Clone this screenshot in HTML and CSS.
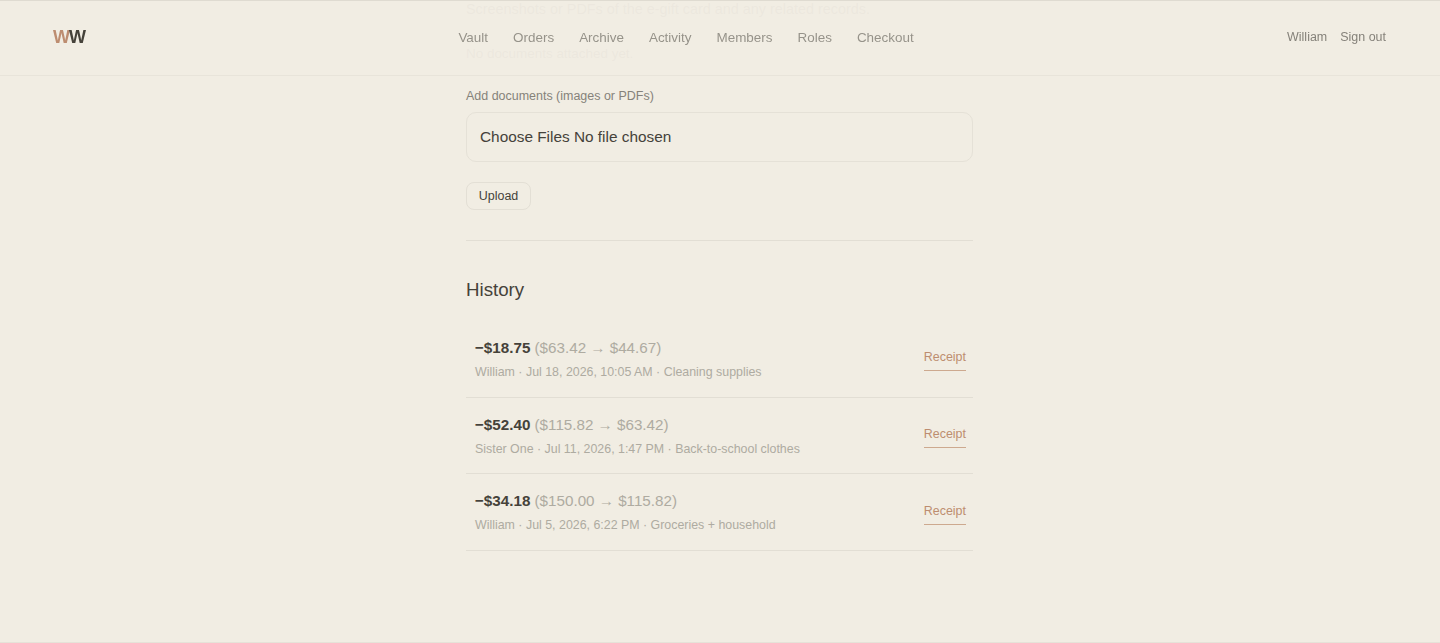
FILE: index.html
```html
<!DOCTYPE html>
<html lang="en">
<head>
<meta charset="utf-8">
<title>Vault</title>
<link rel="stylesheet" href="styles.css">
</head>
<body>
<header class="topbar">
  <a class="logo"><span class="logo-a">W</span><span class="logo-b">W</span></a>
  <nav class="nav">
    <a>Vault</a><a>Orders</a><a>Archive</a><a>Activity</a><a>Members</a><a>Roles</a><a>Checkout</a>
  </nav>
  <div class="user"><span>William</span><a>Sign out</a></div>
</header>
<main class="page">
  <p class="hint">Screenshots or PDFs of the e-gift card and any related records.</p>
  <p class="empty">No documents attached yet.</p>
  <label class="label">Add documents (images or PDFs)</label>
  <div class="file">Choose Files No file chosen</div>
  <button class="upload">Upload</button>
  <hr class="rule">
  <h2 class="title">History</h2>
  <ul class="list">
    <li class="row">
      <div class="info">
        <div class="amounts"><strong>−$18.75</strong> <span>($63.42 → $44.67)</span></div>
        <div class="meta">William · Jul 18, 2026, 10:05 AM · Cleaning supplies</div>
      </div>
      <a class="receipt">Receipt</a>
    </li>
    <li class="row">
      <div class="info">
        <div class="amounts"><strong>−$52.40</strong> <span>($115.82 → $63.42)</span></div>
        <div class="meta">Sister One · Jul 11, 2026, 1:47 PM · Back-to-school clothes</div>
      </div>
      <a class="receipt">Receipt</a>
    </li>
    <li class="row">
      <div class="info">
        <div class="amounts"><strong>−$34.18</strong> <span>($150.00 → $115.82)</span></div>
        <div class="meta">William · Jul 5, 2026, 6:22 PM · Groceries + household</div>
      </div>
      <a class="receipt">Receipt</a>
    </li>
  </ul>
</main>
</body>
</html>
```
FILE: styles.css
```css
* { box-sizing: border-box; }
html, body { margin: 0; height: 643px; overflow: hidden; }
body {
  background: #f1ede3;
  color: #45423a;
  font-family: "Liberation Sans", Arial, sans-serif;
  padding-right: 1px;
  border-top: 1px solid #dfdbd1;
  border-bottom: 1px solid #e6e2d8;
}
.topbar {
  position: fixed;
  top: 0;
  left: 0;
  right: 0;
  height: 76px;
  padding: 0 54px 2px 53px;
  display: flex;
  justify-content: space-between;
  align-items: center;
  background: rgba(241, 237, 227, 0.93);
  border-top: 1px solid #dfdbd1;
  border-bottom: 1px solid #e8e4da;
}
.logo { font-size: 18px; font-weight: 700; letter-spacing: -1px; }
.logo-a { color: #bd8d70; }
.logo-b { color: #45423a; }
.nav { display: flex; gap: 25px; font-size: 13.44px; color: #96938a; }
.user { display: flex; gap: 13px; font-size: 12.48px; color: #85827a; }
.page { width: 507px; margin: 0 auto; }
.hint { margin: 0; font-size: 14.4px; line-height: 16px; color: #a3a096; }
.empty { margin: 29px 0 0; font-size: 13.44px; line-height: 16px; color: #a3a096; }
.label { display: block; margin-top: 26px; font-size: 12.48px; line-height: 16px; color: #85827a; }
.file {
  margin-top: 8px;
  height: 50px;
  padding: 0 13px 1px;
  display: flex;
  align-items: center;
  font-size: 15.36px;
  color: #45423a;
  border: 1px solid #e5e1d7;
  border-radius: 10px;
}
.upload {
  display: block;
  margin-top: 20px;
  width: 65px;
  height: 28px;
  padding: 0;
  font: 12.48px "Liberation Sans", Arial, sans-serif;
  color: #45423a;
  background: transparent;
  border: 1px solid #e3dfd5;
  border-radius: 8px;
}
.rule { margin: 30px 0 0; border: 0; border-top: 1px solid #e2ded4; }
.title { margin: 36px 0 0; font-size: 18.72px; line-height: 26px; font-weight: 400; color: #45423a; }
.list { list-style: none; margin: 18px 0 0; padding: 0; }
.row {
  height: 76.7px;
  padding: 0 7px 0 9px;
  display: flex;
  align-items: center;
  justify-content: space-between;
  border-bottom: 1px solid #e2ded4;
}
.amounts { font-size: 15.2px; line-height: 20px; }
.amounts strong { color: #45423a; }
.amounts span { color: #aeaba1; }
.meta { margin-top: 6px; font-size: 12.4px; line-height: 16px; color: #aeaba1; }
.receipt {
  margin-top: 3px;
  font-size: 12.48px;
  line-height: 16px;
  color: #bd8d70;
  padding-bottom: 5px;
  border-bottom: 1px solid #cda98f;
}
```
